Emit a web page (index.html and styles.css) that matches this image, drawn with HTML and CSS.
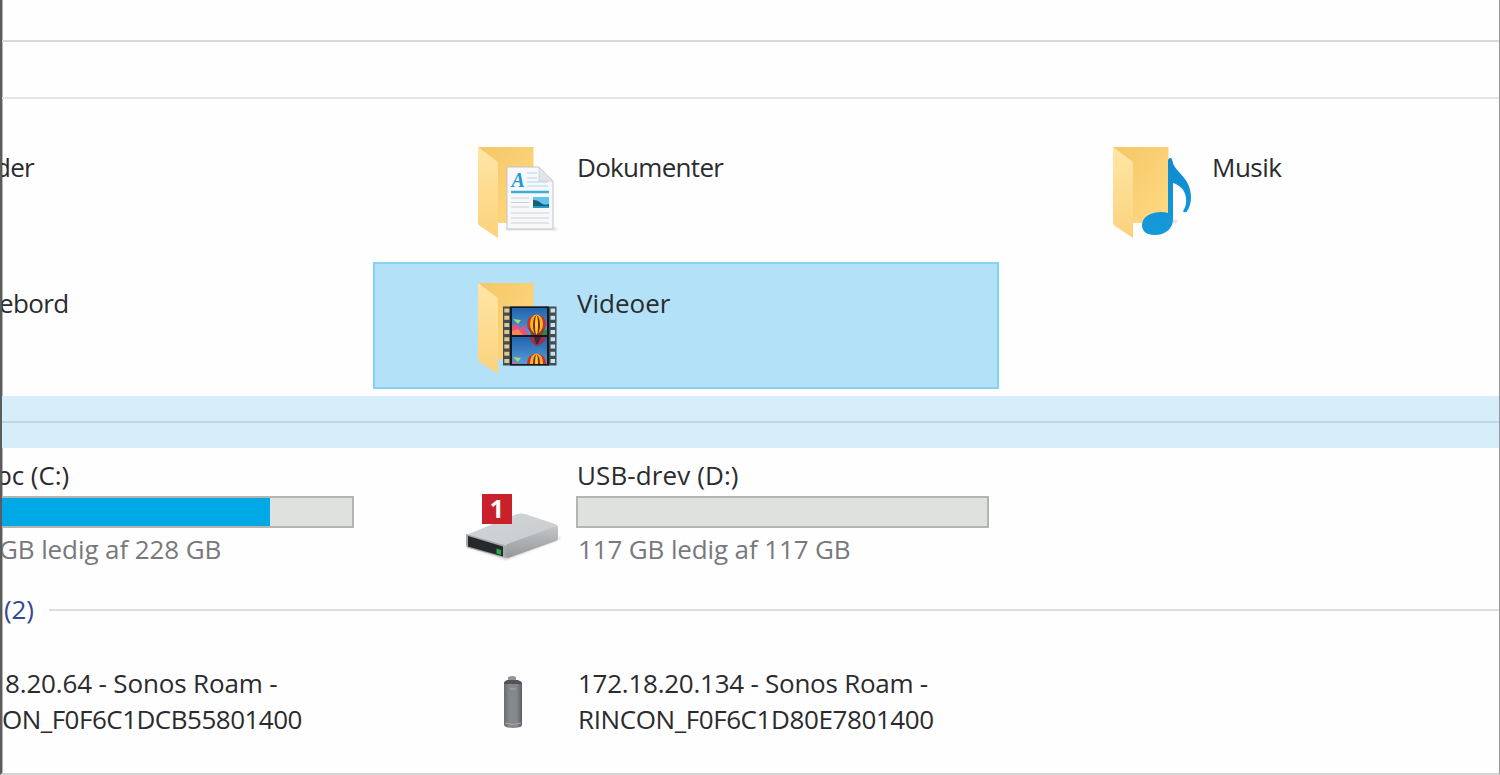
FILE: index.html
```html
<!DOCTYPE html>
<html lang="da">
<head>
    <meta charset="UTF-8">
    <meta name="viewport" content="width=device-width, initial-scale=1.0">
    <title>Denne pc</title>
    <link rel="stylesheet" href="styles.css">
</head>
<body>
    <div class="window">
        <div class="titlebar"></div>
        <div class="toolbar"></div>

        <div class="grid folders">
            <div class="item"><span class="name cut-der">der</span></div>
            <div class="item">
                <svg class="icon" width="90" height="100" viewBox="0 0 90 100">
                    <defs>
                        <linearGradient id="back" x1="0" y1="0" x2="1" y2="1">
                            <stop offset="0" stop-color="#f5c765"/>
                            <stop offset="1" stop-color="#ffd983"/>
                        </linearGradient>
                        <linearGradient id="flap" x1="0" y1="0" x2="0" y2="1">
                            <stop offset="0" stop-color="#ffe6a6"/>
                            <stop offset="1" stop-color="#fbd27c"/>
                        </linearGradient>
                        <linearGradient id="note" x1="0" y1="0" x2="0" y2="1">
                            <stop offset="0" stop-color="#0e8bcf"/>
                            <stop offset="1" stop-color="#149ada"/>
                        </linearGradient>
                        <filter id="soft"><feGaussianBlur stdDeviation="1.3"/></filter>
                        <g id="folder">
                            <path d="M2 6H57.500V82H2z" fill="url(#back)"/>
                            <path d="M2 6L18 18C21 20 22 21 22 24V97L4 85Q2 84 2 82z" fill="url(#flap)"/>
                        </g>
                    </defs>
                    <use href="#folder"/>
                    <path d="M30 87H81V89H30z" fill="#999" opacity=".4" filter="url(#soft)"/>
                    <path d="M31 26H63L77 40V88H31z" fill="#f7f8fa" stroke="#c3c5c9"/>
                    <path d="M63 26V40H77z" fill="#e2e4e7" stroke="#c9cbce" stroke-width=".7"/>
                    <text class="doc-letter" x="35.500" y="46">A</text>
                    <path d="M51 32H61M51 37H61M51 41H72M51 45H72" stroke="#a9d7eb"/>
                    <path d="M35 51H73" stroke="#3daddb" stroke-width="2.4"/>
                    <path d="M35 57H53M35 61.500H53M35 66H53M35 72H73M35 77H73M35 82H73" stroke="#cfd1d6"/>
                    <path d="M57 56H73V67H57z" fill="#63c3ee"/>
                    <path d="M57 59Q62 59 65 62T73 63V67H57z" fill="#1c5e6e"/>
                    <path d="M57 65H73V67H57z" fill="#2299ce"/>
                </svg>
                <span class="name w-dok">Dokumenter</span>
            </div>
            <div class="item">
                <svg class="icon" width="90" height="100" viewBox="0 0 90 100">
                    <use href="#folder"/>
                    <path d="M58 79H66V82H58z" fill="#999" opacity=".35" filter="url(#soft)"/>
                    <path d="M57 20Q57 17 59.500 17Q61 17 61.500 20C63 31 80 36 80 56Q80 65 75.500 71Q73 72 72 70Q76 64 75 57C74 48 68 44 62 42V78C62 88 54 94 44 94C35 94 31 90 31 84C31 76 40 71 50 71Q54 71 57 72z" fill="url(#note)"/>
                </svg>
                <span class="name w-musik">Musik</span>
            </div>

            <div class="item"><span class="name cut-ebord">ebord</span></div>
            <div class="item selected">
                <svg class="icon" width="90" height="100" viewBox="0 0 90 100">
                    <defs>
                        <linearGradient id="sky" x1="0" y1="0" x2="0" y2="1">
                            <stop offset="0" stop-color="#2064ae"/>
                            <stop offset="1" stop-color="#589bd6"/>
                        </linearGradient>
                        <g id="balloon">
                            <ellipse cx="0" cy="0" rx="9.500" ry="9.500" fill="#cc3028"/>
                            <path d="M-8.500 4Q-5 10 -2.500 16H3Q5 10 8.500 4z" fill="#9b3525"/>
                            <ellipse cx="0" cy="0" rx="6.500" ry="9.500" fill="#f4b51f"/>
                            <ellipse cx="0" cy="1" rx="3.500" ry="9.500" fill="#7b2c20"/>
                            <ellipse cx="0" cy="1" rx="1.500" ry="9.500" fill="#ffce2c"/>
                        </g>
                        <clipPath id="frame1"><path d="M36 31H71V58H36z"/></clipPath>
                        <clipPath id="frame2"><path d="M36 60H71V87H36z"/></clipPath>
                    </defs>
                    <use href="#folder"/>
                    <path d="M27 29.500H80.500V88.500H27z" fill="#454b50"/>
                    <path d="M34 29.500H73V88.500H34z" fill="#15191d"/>
                    <path d="M30.800 31.500V88" stroke="#d9c992" stroke-width="5" stroke-dasharray="4 3.200"/>
                    <path d="M76.800 31.500V88" stroke="#c4e4f4" stroke-width="4.500" stroke-dasharray="4 3.200"/>
                    <path d="M36 31H71V58H36z" fill="url(#sky)"/>
                    <path d="M36 60H71V87H36z" fill="url(#sky)"/>
                    <g clip-path="url(#frame1)">
                        <path d="M53 58Q60 52 72 53V58z" fill="#30834b"/>
                        <path d="M36 49L40 47L44 51L48 48L52 58H36z" fill="#e45080"/>
                        <path d="M36 54L42 52L47 58H36z" fill="#f08a50"/>
                        <path d="M37 42L45 43L42 47L39 44z" fill="#a4d96b"/>
                        <use href="#balloon" x="60.500" y="47"/>
                    </g>
                    <g clip-path="url(#frame2)">
                        <path d="M53 60H70Q68 66 62 69H60Q55 65 53 60z" fill="#a52d45"/>
                        <path d="M58 60H65L62 67H60z" fill="#3d2738"/>
                        <path d="M37 80L45 81L42 85L39 82z" fill="#a4d96b"/>
                        <path d="M36 84L43 87H36z" fill="#cf68a0"/>
                        <use href="#balloon" x="60.500" y="86"/>
                    </g>
                </svg>
                <span class="name w-video">Videoer</span>
            </div>
        </div>

        <div class="group-band"><div class="line"></div></div>

        <div class="grid drives">
            <div class="item drive">
                <span class="name cut-pc">pc (C:)</span>
                <div class="bar"><div class="fill"></div></div>
                <span class="free cut-gb">GB ledig af 228 GB</span>
            </div>
            <div class="item">
                <div class="drive-icon">
                    <svg width="110" height="80" viewBox="0 0 110 80">
                        <defs>
                            <linearGradient id="top" x1="0" y1="0" x2="1" y2="1">
                                <stop offset="0" stop-color="#d3d6d8"/>
                                <stop offset="1" stop-color="#c8cbce"/>
                            </linearGradient>
                            <linearGradient id="side" x1="0" y1="0" x2="0" y2="1">
                                <stop offset="0" stop-color="#c3c6c9"/>
                                <stop offset="1" stop-color="#94989b"/>
                            </linearGradient>
                        </defs>
                        <path d="M10 56L49 69L103 48V46L50 63z" fill="#777" opacity=".35" filter="url(#soft)"/>
                        <path d="M9 44L60 23Q64 22 68 23L98 33Q101 34 101 36L49 56z" fill="url(#top)"/>
                        <path d="M48 56Q49 53 53 52L100 35Q101 35 101 38V47Q101 49 99 50L51 67L47 66z" fill="url(#side)"/>
                        <path d="M9 43L47 54Q49 55 49 57V67L11 57Q9 56 9 54z" fill="#a4a8aa"/>
                        <path d="M11 45L46 55.500V65.500L11 55.500z" fill="#25292c"/>
                        <path d="M39.500 57.500L44 59V64L39.500 62.500z" fill="#22b04b"/>
                    </svg>
                    <span class="badge">1</span>
                </div>
                <div class="drive">
                    <span class="name w-usb">USB-drev (D:)</span>
                    <div class="bar"></div>
                    <span class="free w-free">117 GB ledig af 117 GB</span>
                </div>
            </div>
        </div>

        <div class="group-title">
            <span>(2)</span>
            <div class="line"></div>
        </div>

        <div class="grid devices">
            <div class="item device">
                <span class="name cut-ip">8.20.64 - Sonos Roam -</span>
                <span class="name cut-id">ON_F0F6C1DCB55801400</span>
            </div>
            <div class="item">
                <svg class="speaker" width="24" height="56" viewBox="0 0 24 56">
                    <defs>
                        <linearGradient id="can" x1="0" y1="0" x2="1" y2="0">
                            <stop offset="0" stop-color="#686c70"/>
                            <stop offset=".3" stop-color="#85898d"/>
                            <stop offset=".7" stop-color="#85898d"/>
                            <stop offset="1" stop-color="#5b5f63"/>
                        </linearGradient>
                    </defs>
                    <path d="M7 2Q12 0 15 2V7H7z" fill="#92969a"/>
                    <path d="M3 8Q3 6 7 5H16Q21 6 21 9V50Q20 53 12 53T3 50z" fill="url(#can)"/>
                    <path d="M3 9Q3 6 7 5H16Q21 6 21 9z" fill="#505458"/>
                    <path d="M9 14H15M4 48Q12 51 20 48" fill="none" stroke="#a5a9ac"/>
                </svg>
                <div class="device">
                    <span class="name w-ip">172.18.20.134 - Sonos Roam -</span>
                    <span class="name w-id">RINCON_F0F6C1D80E7801400</span>
                </div>
            </div>
        </div>
    </div>
</body>
</html>
```

FILE: styles.css
```css
* {
    box-sizing: border-box;
}
body {
    margin: 0;
    background-color: #fefefe;
    font-family: "Open Sans", "Noto Sans", sans-serif;
    font-size: 26px;
    line-height: 36px;
    color: #2b2b2e;
    overflow: hidden;
}
.window {
    display: flex;
    flex-direction: column;
    width: 1500px;
    height: 775px;
    border-left: 2px solid #5c5c5c;
    border-right: 1px solid #969696;
    border-bottom: 2px solid #d3d3d3;
    box-shadow: inset 1px 0 #b5b5b5;
    overflow: hidden;
}
.titlebar {
    height: 42px;
    border-bottom: 2px solid #d9d9d9;
}
.toolbar {
    height: 57px;
    border-bottom: 2px solid #e5e5e5;
}
.grid {
    display: grid;
    grid-template-columns: 362px 626px 626px;
    column-gap: 9px;
}
.item {
    display: flex;
    white-space: nowrap;
}
.name {
    display: block;
    white-space: nowrap;
}
.folders {
    grid-auto-rows: 127px;
    row-gap: 9px;
    padding-top: 27px;
    height: 297px;
}
.folders .item {
    padding-top: 23px;
}
.icon {
    flex: none;
    margin: -8px 11px 0 103px;
}
.folders .selected {
    padding-top: 21px;
    border: 2px solid #86d2f2;
    background-color: #b3e2f8;
}
.selected .icon {
    margin-left: 101px;
}
.doc-letter {
    font-family: "Liberation Serif", serif;
    font-size: 20px;
    font-style: italic;
    font-weight: bold;
    fill: #1e9bd0;
}
.line {
    flex: 1;
    height: 2px;
    background-color: #dedede;
}
.group-band {
    display: flex;
    align-items: center;
    height: 52px;
    background-color: #d5eef9;
}
.group-band .line {
    background-color: #bed7e4;
}
.drives {
    height: 144px;
    padding-top: 9px;
}
.drive {
    display: flex;
    flex-direction: column;
}
.bar {
    width: 413px;
    height: 32px;
    margin-top: 3px;
    margin-bottom: 3px;
    border: 2px solid #b4b4b4;
    background-color: #dfe1df;
}
.grid > .drive .bar {
    width: 352px;
    border-left: none;
}
.fill {
    width: 268px;
    height: 100%;
    background-color: #00a9e5;
}
.free {
    color: #77797c;
}
.drive-icon {
    position: relative;
    width: 110px;
    margin: 34px 9px 0 84px;
}
.drive-icon svg {
    display: block;
}
.badge {
    position: absolute;
    left: 25px;
    top: 3px;
    width: 30px;
    height: 30px;
    background-color: #c9202b;
    color: #fff;
    font-family: "Open Sans", sans-serif;
    font-size: 25px;
    font-weight: bold;
    line-height: 29px;
    text-align: center;
}
.group-title {
    display: flex;
    align-items: center;
    gap: 15px;
    height: 36px;
    padding-left: 2px;
    color: #35498f;
}
.group-title span {
    margin-top: -3px;
    letter-spacing: -0.2px;
}
.devices {
    padding-top: 37px;
}
.device {
    display: flex;
    flex-direction: column;
}
.speaker {
    flex: none;
    margin: 10px 53px 0 128px;
}

/* tracking of the single labels */
.w-dok, .cut-der {
    letter-spacing: -0.7px;
}
.w-musik {
    letter-spacing: -0.5px;
}
.w-video {
    letter-spacing: 0;
}
.w-usb {
    margin-left: 1px;
    letter-spacing: 0.1px;
}
.w-free {
    margin-left: 2px;
    letter-spacing: -0.13px;
}
.w-ip {
    letter-spacing: -0.25px;
}
.w-id {
    letter-spacing: -0.4px;
}
.cut-der {
    margin-left: -7px;
}
.cut-ebord {
    margin-left: -3px;
    letter-spacing: -0.6px;
}
.cut-pc {
    margin-left: -6px;
    letter-spacing: -0.1px;
}
.cut-gb {
    margin-left: -3px;
    letter-spacing: -0.1px;
}
.cut-ip {
    margin-left: 3px;
    letter-spacing: -0.15px;
}
.cut-id {
    margin-left: 0;
    letter-spacing: -0.5px;
}
```
